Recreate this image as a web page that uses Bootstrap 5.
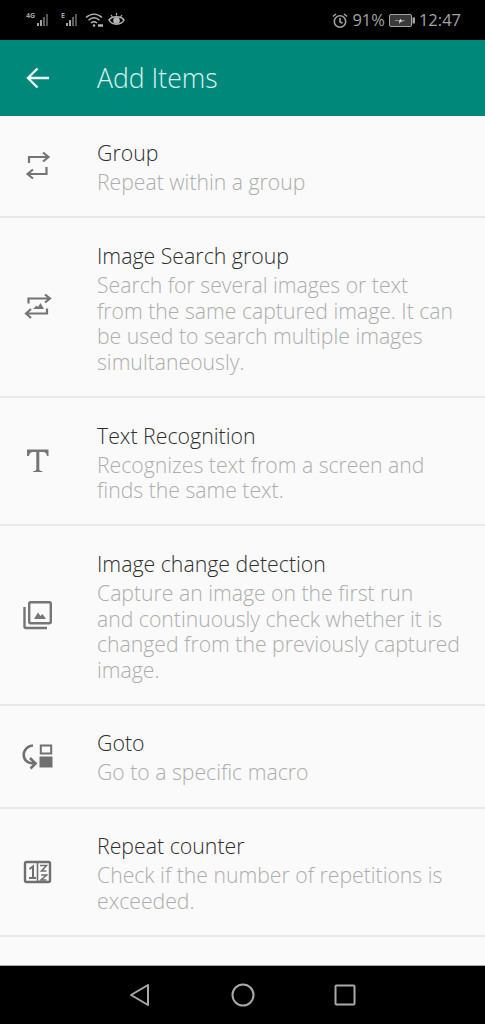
<!DOCTYPE html>
<html lang="en">
<head>
    <meta charset="UTF-8">
    <meta name="viewport" content="width=device-width, initial-scale=1">
    <title>Add Items</title>
    <link rel="stylesheet" href="https://cdn.jsdelivr.net/npm/bootstrap@5.3.0/dist/css/bootstrap.min.css">
    <style>
        body { background: #000; font-family: "Open Sans", "Noto Sans", sans-serif; }
        .phone { width: 485px; height: 1024px; overflow: hidden; background: #fafafa; }
        .status-bar { height: 40px; background: #000; color: #a3a3a3; padding: 0 24px 0 26px; font-size: 16.5px; }
        .app-bar { height: 76px; background: #00897b; color: #d9f3ef; padding-left: 26px; }
        .app-bar h1 { font-size: 26.6px; font-weight: 300; margin: 2px 0 0 47px; }
        .list-group-flush > .item-row,
        .list-group-flush > .item-row:last-child { background: #fafafa; border-width: 0 0 2px; border-color: #e8e8e8; padding: 21.3px 0 21.45px 0; }
        .item-icon { width: 97px; flex: none; padding-left: 22px; }
        .item-title { font-size: 21.3px; line-height: 32px; font-weight: 300; color: #2e2e2e; }
        .item-desc { font-size: 21.2px; line-height: 25.75px; font-weight: 300; color: #adadad; white-space: nowrap; }
        .nav-keys { height: 59px; background: #000; margin-top: 28px; padding: 0 129px 0 128px; border-top: 1px solid #aaa; }
    </style>
</head>
<body>
    <div class="phone">
        <!-- Status bar -->
        <div class="status-bar d-flex align-items-center justify-content-between">
            <div class="d-flex align-items-center gap-1">
                <svg width="26" height="16" viewBox="0 0 26 16" fill="#a3a3a3"><text x="0" y="6" font-size="7" font-weight="700">4G</text><rect x="11" y="11" width="2" height="3"/><rect x="14" y="8" width="2" height="6"/><rect x="17" y="5" width="2" height="9" opacity=".6"/><rect x="20" y="2" width="2" height="12" opacity=".5"/></svg>
                <svg width="21" height="16" viewBox="0 0 21 16" fill="#a3a3a3" class="ms-1"><text x="1" y="6" font-size="7" font-weight="700">E</text><rect x="6" y="11" width="2" height="3"/><rect x="9" y="8" width="2" height="6"/><rect x="12" y="5" width="2" height="9" opacity=".6"/><rect x="15" y="2" width="2" height="12" opacity=".5"/></svg>
                <svg width="19" height="16" viewBox="0 0 19 16" fill="none" stroke="#b5b5b5" stroke-width="1.5"><path d="M1 5.5C6 1 12 1 17 5.5M3.5 8.2C7 5.2 11 5.2 14.5 8.2M6 11C8 9.4 10 9.4 12 11"/><circle cx="9" cy="13.5" r="1.2" fill="#b5b5b5" stroke="none"/><path d="M13 13.5h5" stroke-width="2.5"/></svg>
                <svg width="17" height="16" viewBox="0 0 17 16" fill="none" stroke="#b5b5b5" stroke-width="1.5"><path d="M1 8C4 3.5 13 3.5 16 8 13 13.5 4 13.5 1 8z"/><circle cx="8.5" cy="8.5" r="2.6" fill="#b5b5b5"/><path d="M3 3l1.500 2M8.500 1v2.500M14 3l-1.500 2" stroke-width="1.200"/></svg>
            </div>
            <div class="d-flex align-items-center">
                <svg width="16" height="17" viewBox="0 0 16 17" fill="none" stroke="#a3a3a3" stroke-width="1.6"><circle cx="8" cy="9.500" r="5.700"/><path d="M8 6v3.700l2.500 1.500M1 4.500L4 2M15 4.500L12 2"/></svg>
                <span class="ms-1">91%</span>
                <svg width="26" height="13" viewBox="0 0 26 13" class="ms-1"><rect x=".5" y=".5" width="22" height="12" rx="1.500" fill="#3a3a3a" stroke="#a3a3a3"/><rect x="23.500" y="3.500" width="2.500" height="6" fill="#a3a3a3"/><path d="M6 6.500h4.500l1-2 1 2h4l-5 1.500-1 2-.5-3H6z" fill="#d8d8d8"/></svg>
                <span class="ms-1">12:47</span>
            </div>
        </div>

        <!-- App bar -->
        <header class="app-bar d-flex align-items-center">
            <svg width="24" height="24" viewBox="0 0 24 24" fill="none" stroke="#eefaf8" stroke-width="2.400"><path d="M23 12H2M11.500 2.500L2 12l9.500 9.500"/></svg>
            <h1>Add Items</h1>
        </header>

        <!-- Items -->
        <div class="list-group list-group-flush">
            <div class="list-group-item item-row d-flex align-items-center">
                <div class="item-icon"><svg width="32" height="32" viewBox="0 0 32 32" fill="none" stroke="#757575" stroke-width="2.200"><path d="M7 13V7h19M21 2.500L26.500 7 21 11.500M24.500 17v7H6M11 19.500L5.500 24l5.500 4.500"/></svg></div>
                <div>
                    <div class="item-title">Group</div>
                    <div class="item-desc">Repeat within a group</div>
                </div>
            </div>
            <div class="list-group-item item-row d-flex align-items-center">
                <div class="item-icon"><svg width="32" height="32" viewBox="0 0 32 32" fill="none" stroke="#757575" stroke-width="2.200"><path d="M6.500 12.500V7.500H27M23 3.500L28 7.500l-5 4M25 17.500v5H5M9 18l-5 4.500L9 27"/><path d="M11 18l3.500-3.500 1.500 1.500 2.500-4 3.500 6z" fill="#757575" stroke="none"/></svg></div>
                <div>
                    <div class="item-title">Image Search group</div>
                    <div class="item-desc">Search for several images or text<br>from the same captured image. It can<br>be used to search multiple images<br>simultaneously.</div>
                </div>
            </div>
            <div class="list-group-item item-row d-flex align-items-center">
                <div class="item-icon"><svg width="32" height="32" viewBox="0 0 32 32" fill="#757575"><path d="M5 4.500h21.500V11H25c-.5-2.500-1.500-4-4-4H17.300v17c0 1.500.7 2 3 2V27h-9v-1c2.300 0 3-.5 3-2V7H11c-2.500 0-3.500 1.500-4 4H5z"/></svg></div>
                <div>
                    <div class="item-title">Text Recognition</div>
                    <div class="item-desc">Recognizes text from a screen and<br>finds the same text.</div>
                </div>
            </div>
            <div class="list-group-item item-row d-flex align-items-center">
                <div class="item-icon"><svg width="32" height="32" viewBox="0 0 32 32" fill="none" stroke="#757575" stroke-width="2.400"><rect x="7.200" y="3.200" width="21.600" height="21" rx="1.500"/><path d="M2.500 8v19.500c0 1 .5 1.500 1.500 1.500h21"/><path d="M12 20l4-6.500 2.500 3.500 2-2 3.500 5z" fill="#757575" stroke="none"/></svg></div>
                <div>
                    <div class="item-title">Image change detection</div>
                    <div class="item-desc">Capture an image on the first run<br>and continuously check whether it is<br>changed from the previously captured<br>image.</div>
                </div>
            </div>
            <div class="list-group-item item-row d-flex align-items-center">
                <div class="item-icon"><svg width="32" height="32" viewBox="0 0 32 32" fill="none" stroke="#707070" stroke-width="2.600"><path d="M11 5.500C4 6 0 12.500 2.500 18.500 4 22 8 23.500 13 23.500M8 18l5.500 5.500L8.500 28.500"/><rect x="18.800" y="5.500" width="10.400" height="8" stroke-width="2"/><rect x="17.500" y="16.500" width="13" height="11" fill="#707070" stroke="none"/></svg></div>
                <div>
                    <div class="item-title">Goto</div>
                    <div class="item-desc">Go to a specific macro</div>
                </div>
            </div>
            <div class="list-group-item item-row d-flex align-items-center">
                <div class="item-icon"><svg width="32" height="32" viewBox="0 0 32 32" fill="none" stroke="#6f6f6f" stroke-width="2.400"><rect x="3" y="6" width="25" height="20" rx="1.500"/><path d="M15.500 6v20" stroke-width="1.600"/><path d="M7.500 13l3.500-2.500V22M7 22h7" stroke-width="2"/><path d="M18 9.500h6.500L19.500 15h5M19 19h5.500l-5.500 5h5.500" stroke-width="1.600"/></svg></div>
                <div>
                    <div class="item-title">Repeat counter</div>
                    <div class="item-desc">Check if the number of repetitions is<br>exceeded.</div>
                </div>
            </div>
        </div>

        <!-- Navigation keys -->
        <nav class="nav-keys d-flex align-items-center justify-content-between">
            <svg width="24" height="26" viewBox="0 0 24 26" fill="none" stroke="#a9a9a9" stroke-width="2" stroke-linejoin="round"><path d="M20 3L3 13l17 10z"/></svg>
            <svg width="24" height="24" viewBox="0 0 24 24" fill="none" stroke="#a9a9a9" stroke-width="2"><circle cx="12" cy="12" r="10.500"/></svg>
            <svg width="22" height="22" viewBox="0 0 22 22" fill="none" stroke="#a9a9a9" stroke-width="2" stroke-linejoin="round"><rect x="1.500" y="1.500" width="19" height="19" rx="1"/></svg>
        </nav>
    </div>
    <script src="https://cdn.jsdelivr.net/npm/bootstrap@5.3.0/dist/js/bootstrap.bundle.min.js"></script>
</body>
</html>
